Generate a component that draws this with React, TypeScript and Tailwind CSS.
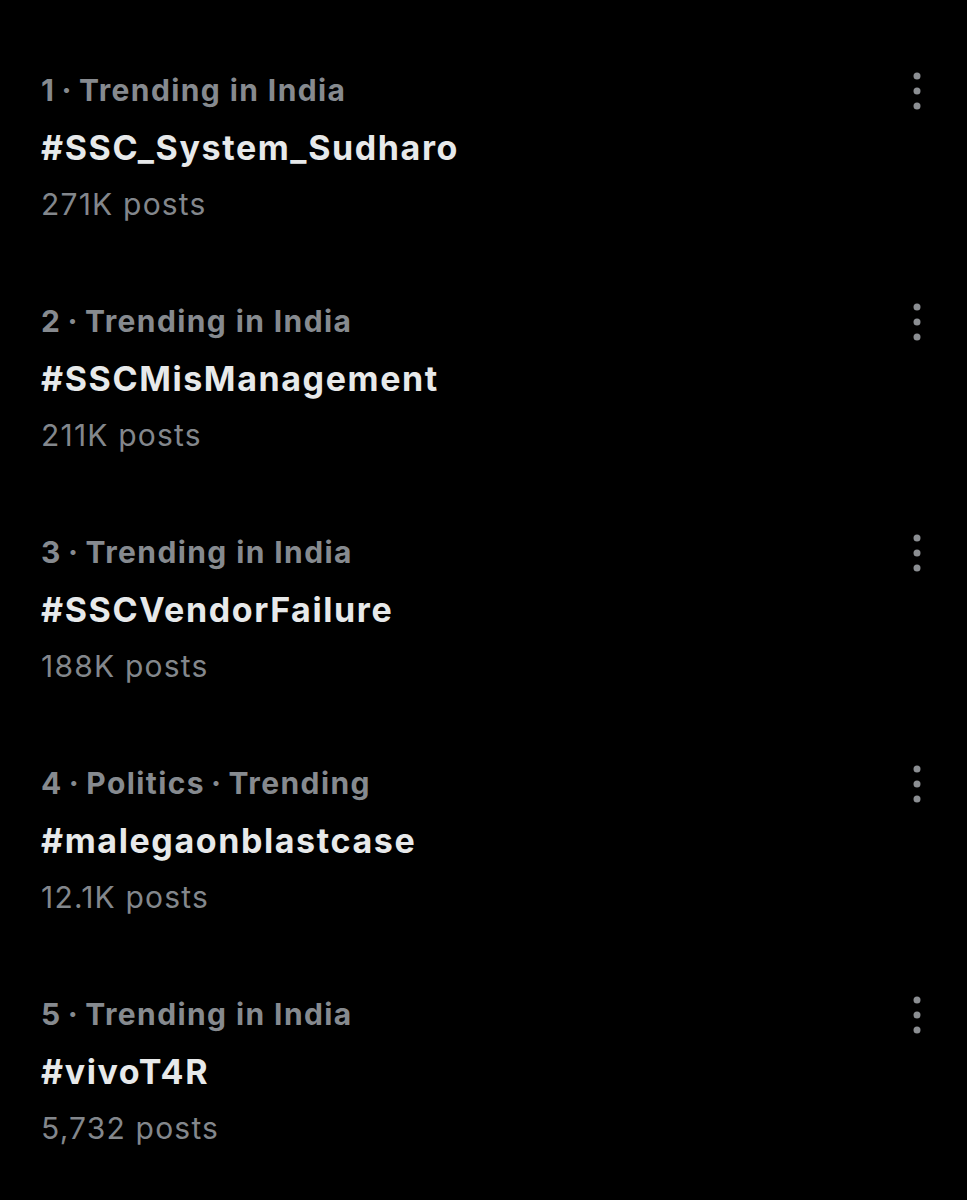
const trends = [
  { meta: ["1", "Trending in India"], tag: "#SSC_System_Sudharo", posts: "271K posts" },
  { meta: ["2", "Trending in India"], tag: "#SSCMisManagement", posts: "211K posts" },
  { meta: ["3", "Trending in India"], tag: "#SSCVendorFailure", posts: "188K posts" },
  { meta: ["4", "Politics", "Trending"], tag: "#malegaonblastcase", posts: "12.1K posts" },
  { meta: ["5", "Trending in India"], tag: "#vivoT4R", posts: "5,732 posts" },
];

function MoreIcon() {
  return (
    <svg width="10" height="40" viewBox="0 0 10 40" className="text-[#8b8e92]">
      <circle cx="5" cy="5" r="3.5" fill="currentColor" />
      <circle cx="5" cy="20" r="3.5" fill="currentColor" />
      <circle cx="5" cy="35" r="3.5" fill="currentColor" />
    </svg>
  );
}

export default function App() {
  return (
    <div className="min-h-[1200px] w-full bg-black pt-[62px] font-['Inter',sans-serif]">
      <div className="flex flex-col gap-[60px]">
        {trends.map((t) => (
          <div key={t.tag} className="flex flex-col pl-[41px] pr-[45px]">
            <div className="flex items-center justify-between h-[57px]">
              <span className="text-[30px] font-bold text-[#868a8f] tracking-[1.4px]">
                {t.meta.join("\u2009·\u2009")}
              </span>
              <MoreIcon />
            </div>
            <div className="h-[57px] flex items-center text-[34px] font-bold text-[#e7e9ea] tracking-[1.6px]">
              {t.tag}
            </div>
            <div className="h-[57px] flex items-center text-[30px] text-[#83878c] tracking-[1.2px]">
              {t.posts}
            </div>
          </div>
        ))}
      </div>
    </div>
  );
}
